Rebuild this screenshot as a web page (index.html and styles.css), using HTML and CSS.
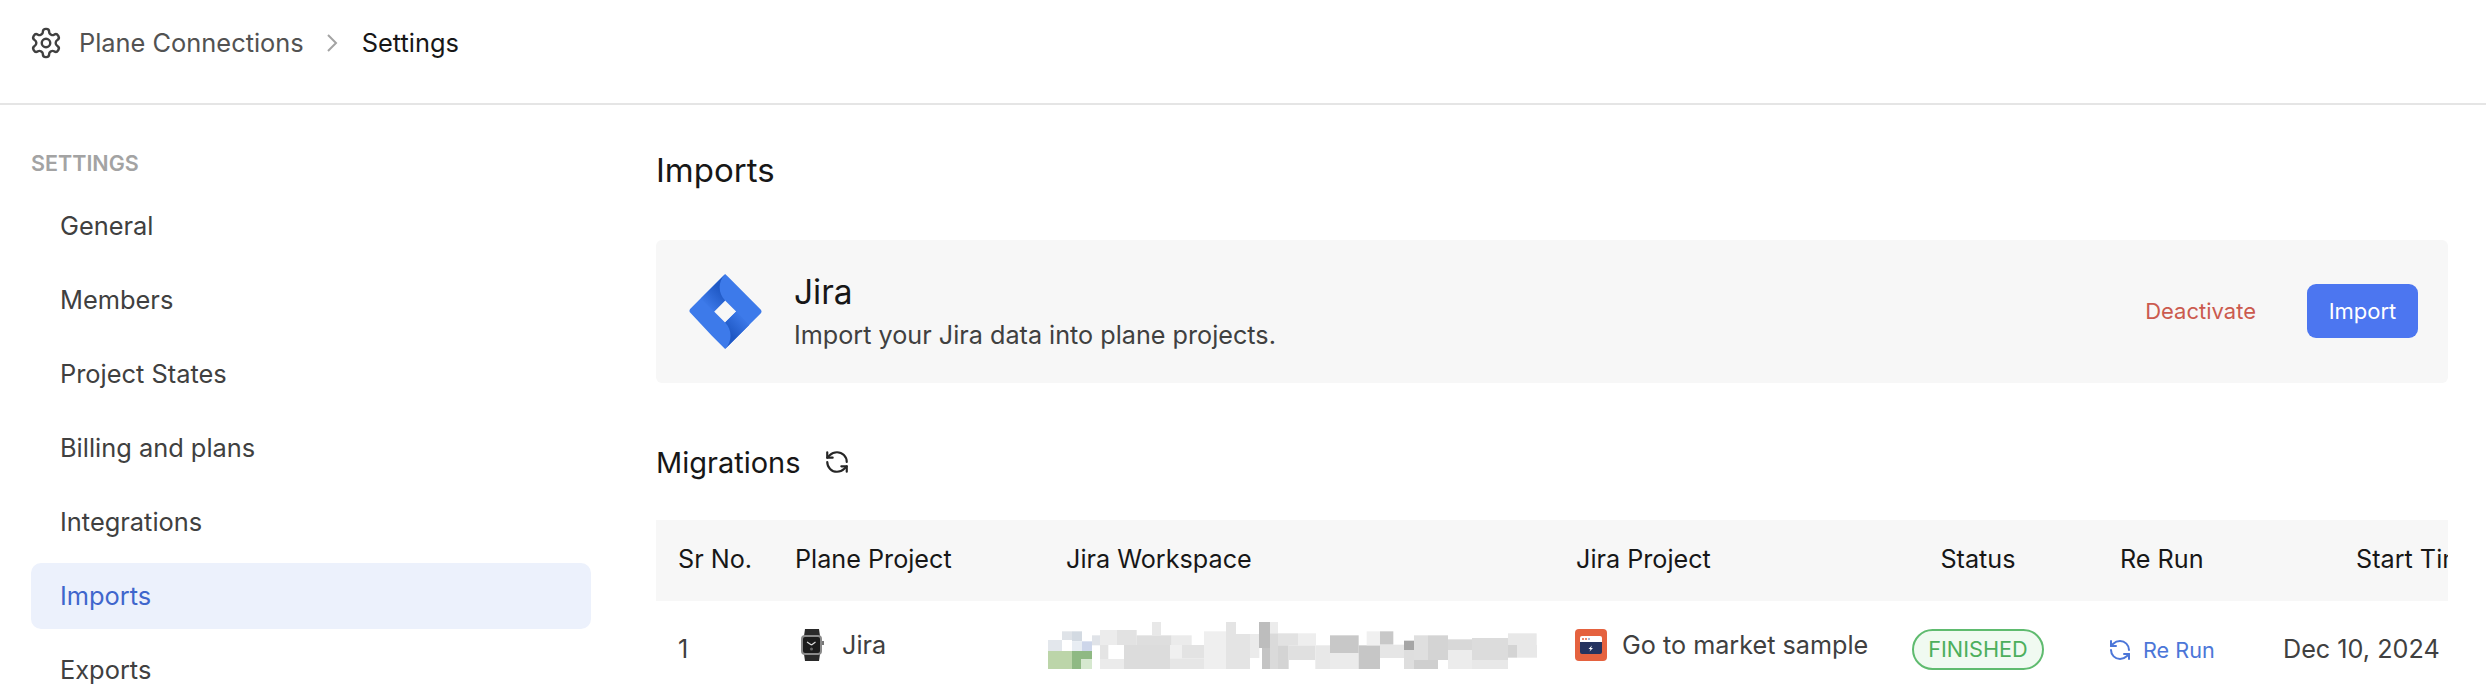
FILE: index.html
```html
<!DOCTYPE html>
<html lang="en">
<head>
    <meta charset="UTF-8">
    <title>Imports</title>
    <link rel="stylesheet" href="styles.css">
</head>
<body>
<header class="topbar">
    <svg class="gear" viewBox="0 0 24 24">
        <path d="M12.22 2h-.44a2 2 0 0 0-2 2v.18a2 2 0 0 1-1 1.73l-.43.25a2 2 0 0 1-2 0l-.15-.08a2 2 0 0 0-2.73.73l-.22.38a2 2 0 0 0 .73 2.73l.15.1a2 2 0 0 1 1 1.72v.51a2 2 0 0 1-1 1.74l-.15.09a2 2 0 0 0-.73 2.73l.22.38a2 2 0 0 0 2.73.73l.15-.08a2 2 0 0 1 2 0l.43.25a2 2 0 0 1 1 1.73V20a2 2 0 0 0 2 2h.44a2 2 0 0 0 2-2v-.18a2 2 0 0 1 1-1.73l.43-.25a2 2 0 0 1 2 0l.15.08a2 2 0 0 0 2.73-.73l.22-.39a2 2 0 0 0-.73-2.73l-.15-.08a2 2 0 0 1-1-1.74v-.5a2 2 0 0 1 1-1.74l.15-.09a2 2 0 0 0 .73-2.73l-.22-.38a2 2 0 0 0-2.73-.73l-.15.08a2 2 0 0 1-2 0l-.43-.25a2 2 0 0 1-1-1.73V4a2 2 0 0 0-2-2z"/>
        <circle cx="12" cy="12" r="3"/>
    </svg>
    <span class="crumb">Plane Connections</span>
    <svg class="chevron" viewBox="0 0 24 24"><path d="m8 4 8 8-8 8"/></svg>
    <span class="crumb-current">Settings</span>
</header>

<div class="layout">
    <nav class="sidebar">
        <div class="sidebar-title">SETTINGS</div>
        <a class="nav-item">General</a>
        <a class="nav-item">Members</a>
        <a class="nav-item">Project States</a>
        <a class="nav-item">Billing and plans</a>
        <a class="nav-item">Integrations</a>
        <a class="nav-item active">Imports</a>
        <a class="nav-item">Exports</a>
    </nav>

    <main class="content">
        <h1 class="page-title">Imports</h1>

        <section class="service-card">
            <svg class="jira-logo" viewBox="0 -1 71.8 74.7">
                <defs>
                    <linearGradient id="foldTop" x1="34" y1="14" x2="16" y2="31" gradientUnits="userSpaceOnUse">
                        <stop offset="0.1" stop-color="#1f58c4"/>
                        <stop offset="1" stop-color="#3d7aea"/>
                    </linearGradient>
                    <linearGradient id="foldBottom" x1="37" y1="59" x2="55" y2="42" gradientUnits="userSpaceOnUse">
                        <stop offset="0.1" stop-color="#1f58c4"/>
                        <stop offset="1" stop-color="#3d7aea"/>
                    </linearGradient>
                </defs>
                <path fill="#3d7aea" d="M70.9 34.3 38.7 2.1 35.5-1 11.3 23.1.9 33.5c-1.2 1.1-1.2 3 0 4.1l21.4 22.9 13.2 13.2 24.2-24.2.4-.4 10.8-10.7c1.2-1.2 1.2-3 0-4.1zM35.5 47.4l-11-11 11-11 11 11-11 11z"/>
                <path fill="url(#foldTop)" d="M35.5 25.4c-7.2-7.2-7.2-18.9-.1-26.1L11.3 23.4l13.1 13.1 11.1-11.1z"/>
                <path fill="url(#foldBottom)" d="M46.6 36.3 35.5 47.4c7.3 7.3 7.3 19 0 26.3l24.2-24.2-13.1-13.2z"/>
            </svg>
            <div class="service-text">
                <div class="service-name">Jira</div>
                <div class="service-desc">Import your Jira data into plane projects.</div>
            </div>
            <button class="btn-deactivate">Deactivate</button>
            <button class="btn-import">Import</button>
        </section>

        <div class="migrations-head">
            <h2 class="migrations-title">Migrations</h2>
            <svg class="refresh" viewBox="0 0 24 24">
                <path d="M21 12a9 9 0 0 0-9-9 9.75 9.75 0 0 0-6.74 2.74L3 8"/>
                <path d="M3 3v5h5"/>
                <path d="M3 12a9 9 0 0 0 9 9 9.75 9.75 0 0 0 6.74-2.74L21 16"/>
                <path d="M16 16h5v5"/>
            </svg>
        </div>

        <div class="table">
            <div class="row head">
                <div>Sr No.</div>
                <div>Plane Project</div>
                <div>Jira Workspace</div>
                <div>Jira Project</div>
                <div class="status-head">Status</div>
                <div>Re Run</div>
                <div>Start Time</div>
            </div>
            <div class="row body">
                <div class="sr">1</div>
                <div class="with-icon">
                    <svg class="watch" viewBox="0 0 24 32">
                        <path fill="#2a2a2a" d="M5 0h14l1 7H4zM4 25h16l-1 7H5z"/>
                        <rect x="1" y="6" width="21" height="20" rx="4" fill="#8a8a8a"/>
                        <rect x="3" y="8" width="17" height="16" rx="2" fill="#1c1c1c"/>
                        <rect x="22" y="12" width="2" height="4" fill="#777"/>
                        <path stroke="#ddd" stroke-width="1.2" fill="none" d="M11.5 16 7 13M11.500 16l4-3"/>
                        <circle cx="11.5" cy="20" r="1.5" fill="#666"/>
                    </svg>
                    <span>Jira</span>
                </div>
                <div class="workspace">
                    <svg class="mosaic" viewBox="0 0 1530 264">
                        <rect x="24" y="123" width="72" height="54" fill="#bcd5a9"/>
                        <rect x="96" y="123" width="27" height="54" fill="#8fb983"/>
                        <rect x="123" y="123" width="33" height="25" fill="#8fb983"/>
                        <rect x="123" y="148" width="33" height="29" fill="#d6e8cf"/>
                        <rect x="24" y="90" width="42" height="33" fill="#e3e7ec"/>
                        <rect x="66" y="64" width="30" height="26" fill="#dfe3e8"/>
                        <rect x="96" y="64" width="30" height="30" fill="#d3dae2"/>
                        <rect x="96" y="94" width="30" height="29" fill="#e8edf3"/>
                        <rect x="126" y="94" width="30" height="29" fill="#cdd6ea"/>
                        <rect x="156" y="76" width="24" height="30" fill="#e0e3e8"/>
                        <rect x="180" y="60" width="50" height="45" fill="#ececec"/>
                        <rect x="230" y="60" width="60" height="45" fill="#e2e2e2"/>
                        <rect x="180" y="105" width="25" height="42" fill="#e4e4e4"/>
                        <rect x="180" y="147" width="72" height="30" fill="#ebebeb"/>
                        <rect x="252" y="105" width="138" height="72" fill="#dcdcdc"/>
                        <rect x="290" y="76" width="105" height="30" fill="#dedede"/>
                        <rect x="336" y="36" width="27" height="40" fill="#e8e8e8"/>
                        <rect x="395" y="76" width="60" height="30" fill="#ebebeb"/>
                        <rect x="390" y="105" width="36" height="40" fill="#f0f0f0"/>
                        <rect x="426" y="105" width="66" height="40" fill="#e3e3e3"/>
                        <rect x="390" y="145" width="102" height="32" fill="#e6e6e6"/>
                        <rect x="492" y="64" width="66" height="113" fill="#efefef"/>
                        <rect x="558" y="36" width="30" height="36" fill="#e4e4e4"/>
                        <rect x="558" y="72" width="72" height="105" fill="#e4e4e4"/>
                        <rect x="630" y="72" width="28" height="72" fill="#ebebeb"/>
                        <rect x="657" y="36" width="33" height="78" fill="#bdbdbd"/>
                        <rect x="690" y="36" width="24" height="34" fill="#ececec"/>
                        <rect x="666" y="114" width="24" height="63" fill="#c4c4c4"/>
                        <rect x="690" y="70" width="24" height="107" fill="#dadada"/>
                        <rect x="714" y="70" width="60" height="36" fill="#e2e2e2"/>
                        <rect x="714" y="106" width="32" height="71" fill="#d4d4d4"/>
                        <rect x="746" y="106" width="80" height="44" fill="#e0e0e0"/>
                        <rect x="774" y="70" width="54" height="36" fill="#eeeeee"/>
                        <rect x="826" y="106" width="44" height="71" fill="#e8e8e8"/>
                        <rect x="870" y="76" width="86" height="54" fill="#c8c8c8"/>
                        <rect x="870" y="130" width="86" height="47" fill="#ebebeb"/>
                        <rect x="956" y="106" width="64" height="71" fill="#c6c6c6"/>
                        <rect x="980" y="64" width="40" height="42" fill="#f0f0f0"/>
                        <rect x="1020" y="64" width="40" height="40" fill="#c8c8c8"/>
                        <rect x="1020" y="104" width="72" height="40" fill="#e6e6e6"/>
                        <rect x="1092" y="120" width="30" height="57" fill="#dedede"/>
                        <rect x="1092" y="92" width="30" height="28" fill="#a6a6a6"/>
                        <rect x="1122" y="76" width="42" height="74" fill="#dfdfdf"/>
                        <rect x="1164" y="76" width="60" height="74" fill="#d4d4d4"/>
                        <rect x="1122" y="150" width="72" height="27" fill="#cfcfcf"/>
                        <rect x="1224" y="88" width="72" height="32" fill="#d8d8d8"/>
                        <rect x="1224" y="120" width="72" height="57" fill="#ececec"/>
                        <rect x="1296" y="84" width="108" height="66" fill="#dcdcdc"/>
                        <rect x="1296" y="150" width="108" height="27" fill="#e8e8e8"/>
                        <rect x="1404" y="70" width="86" height="35" fill="#e8e8e8"/>
                        <rect x="1404" y="105" width="27" height="38" fill="#d4d4d4"/>
                        <rect x="1431" y="105" width="60" height="38" fill="#e8e8e8"/>
                    </svg>
                </div>
                <div class="with-icon">
                    <svg class="project-icon" viewBox="0 0 32 32">
                        <rect width="32" height="32" rx="4" fill="#e5623f"/>
                        <path fill="#fff" d="M5 9a2 2 0 0 1 2-2h18a2 2 0 0 1 2 2v4H5z"/>
                        <path fill="#24335f" d="M5 13h22v10a2 2 0 0 1-2 2H7a2 2 0 0 1-2-2z"/>
                        <circle cx="8" cy="10" r="1" fill="#e5623f"/>
                        <circle cx="11" cy="10" r="1" fill="#e5623f"/>
                        <circle cx="14" cy="10" r="1" fill="#8fa4d0"/>
                        <path fill="#fff" d="M17 16.500 13.500 20h2l-1 2.500 3.500-3.500h-2z"/>
                    </svg>
                    <span>Go to market sample</span>
                </div>
                <div class="status-cell"><span class="pill">FINISHED</span></div>
                <div class="rerun">
                    <svg class="refresh-small" viewBox="0 0 24 24">
                        <path d="M21 12a9 9 0 0 0-9-9 9.75 9.75 0 0 0-6.74 2.74L3 8"/>
                        <path d="M3 3v5h5"/>
                        <path d="M3 12a9 9 0 0 0 9 9 9.75 9.75 0 0 0 6.74-2.74L21 16"/>
                        <path d="M16 16h5v5"/>
                    </svg>
                    <span>Re Run</span>
                </div>
                <div class="date">Dec 10, 2024</div>
            </div>
        </div>
    </main>
</div>
</body>
</html>
```

FILE: styles.css
```css
html, body {
    margin: 0;
    height: 698px;
    overflow: hidden;
    background: #fff;
}

body {
    font-family: "Inter", "Liberation Sans", sans-serif;
    color: #262626;
}

.topbar {
    height: 105px;
    box-sizing: border-box;
    border-bottom: 2px solid #e5e5e5;
    display: flex;
    align-items: center;
    padding: 0 0 18px 29px;
    font-size: 25.4px;
}

.gear {
    width: 34px;
    height: 34px;
    margin-right: 16px;
    fill: none;
    stroke: #404040;
    stroke-width: 1.7;
    stroke-linecap: round;
    stroke-linejoin: round;
}

.crumb {
    color: #525252;
}

.chevron {
    width: 24px;
    height: 24px;
    margin: 0 18px 0 16px;
    fill: none;
    stroke: #a3a3a3;
    stroke-width: 2;
}

.crumb-current {
    color: #171717;
}

.layout {
    display: flex;
}

.sidebar {
    width: 560px;
    margin-left: 31px;
    padding-top: 44px;
    display: flex;
    flex-direction: column;
    gap: 8px;
}

.sidebar-title {
    font-size: 21.5px;
    font-weight: 600;
    color: #a3a3a3;
    line-height: 28px;
    margin-bottom: 8px;
}

.nav-item {
    height: 66px;
    flex-shrink: 0;
    box-sizing: border-box;
    display: flex;
    align-items: center;
    padding: 0 0 2px 29px;
    border-radius: 10px;
    font-size: 25.4px;
    color: #404040;
}

.nav-item.active {
    background: #ecf1fc;
    color: #3f66cc;
}

.content {
    width: 1792px;
    margin-left: 65px;
    flex-shrink: 0;
}

.page-title {
    font-size: 33px;
    font-weight: 400;
    line-height: 40px;
    color: #171717;
    margin: 45px 0 50px;
}

.service-card {
    height: 143px;
    background: #f7f7f7;
    border-radius: 6px;
    display: flex;
    align-items: center;
    padding: 0 30px 0 33px;
}

.jira-logo {
    width: 73px;
    height: 75px;
    margin-right: 32px;
}

.service-text {
    flex: 1;
    padding-top: 4px;
}

.service-name {
    font-size: 33.5px;
    line-height: 40px;
    color: #171717;
}

.service-desc {
    font-size: 25.2px;
    line-height: 40px;
    margin-top: 3px;
    color: #404040;
}

.btn-deactivate {
    background: none;
    border: 0;
    padding: 0;
    margin: 0 51px 2px 0;
    font: inherit;
    font-size: 22px;
    color: #cb5a4e;
}

.btn-import {
    width: 111px;
    height: 54px;
    border: 0;
    padding: 0;
    margin-bottom: 1px;
    border-radius: 9px;
    background: #4c76f0;
    font: inherit;
    font-size: 22px;
    color: #fff;
}

.migrations-head {
    display: flex;
    align-items: center;
    gap: 23px;
    margin-top: 59px;
    height: 40px;
}

.migrations-title {
    font-size: 29px;
    font-weight: 400;
    color: #171717;
    margin: 0;
}

.refresh {
    width: 26px;
    height: 26px;
    fill: none;
    stroke: #262626;
    stroke-width: 2;
    stroke-linecap: round;
    stroke-linejoin: round;
}

.table {
    margin-top: 38px;
    overflow: hidden;
}

.row {
    display: grid;
    grid-template-columns: 117px 271px 510px 336px 208px 236px 300px;
    width: 2178px;
    align-items: center;
}

.row.head {
    height: 81px;
    background: #f7f7f7;
    font-size: 25.2px;
    color: #171717;
    width: auto;
    padding-bottom: 4px;
    box-sizing: border-box;
}

.row.head > div {
    padding-left: 22px;
    white-space: nowrap;
}

.row.head .status-head {
    padding: 0 32px 0 0;
    text-align: center;
}

.row.body {
    height: 96px;
    font-size: 25.2px;
    color: #404040;
}

.row.body > div {
    white-space: nowrap;
}

.sr {
    padding-left: 22px;
    margin-top: -2px;
}

.with-icon {
    display: flex;
    align-items: center;
    padding-left: 22px;
    gap: 18px;
    margin-top: -10px;
}

.watch {
    width: 24px;
    height: 32px;
    margin-left: 5px;
}

.project-icon {
    width: 32px;
    height: 32px;
    margin-left: -1px;
    margin-right: -3px;
}

.workspace {
    margin-left: -4px;
    margin-top: 9px;
    height: 88px;
    align-self: start;
}

.mosaic {
    width: 510px;
    height: 88px;
    display: block;
}

.status-cell {
    text-align: center;
    padding-right: 32px;
}

.pill {
    display: inline-block;
    width: 132px;
    height: 41px;
    box-sizing: border-box;
    border: 2px solid #5fbb6f;
    border-radius: 21px;
    background: #f0faf1;
    color: #4caf5c;
    font-size: 21.7px;
    line-height: 37px;
}

.rerun {
    display: flex;
    align-items: center;
    gap: 11px;
    padding-left: 10px;
    color: #4c76d8;
    font-size: 21.6px;
}

.refresh-small {
    width: 24px;
    height: 24px;
    fill: none;
    stroke: #4c76d8;
    stroke-width: 2;
    stroke-linecap: round;
    stroke-linejoin: round;
}

.date {
    margin-left: -51px;
    margin-top: -2px;
}
```
